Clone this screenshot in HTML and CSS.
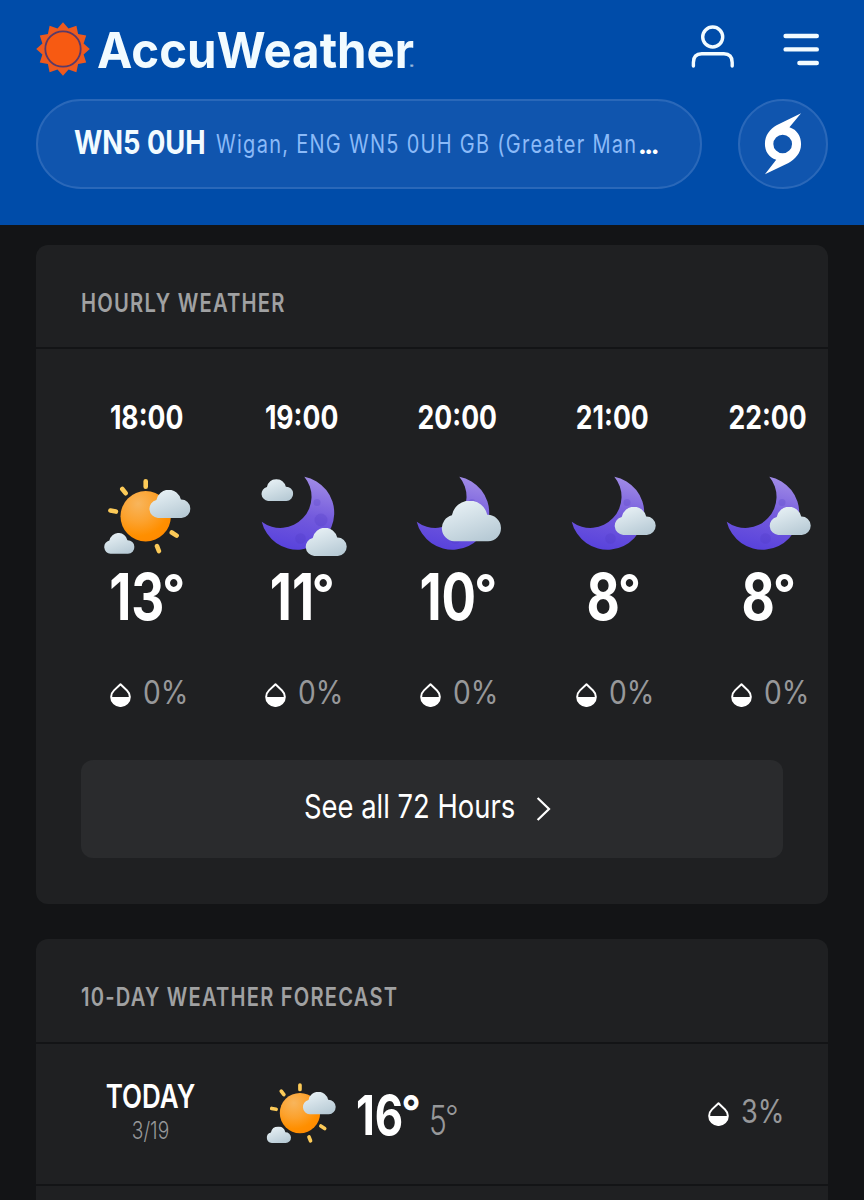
FILE: index.html
```html
<!DOCTYPE html>
<html lang="en">
<head>
<meta charset="utf-8">
<title>Wigan Hourly Weather | AccuWeather</title>
<link rel="stylesheet" href="styles.css">
</head>
<body>
<svg class="defs" width="0" height="0">
  <defs>
    <linearGradient id="cloudFill" x1="0.2" y1="0" x2="0.7" y2="1">
      <stop offset="0" stop-color="#e9f2f6"/>
      <stop offset="1" stop-color="#b7cad5"/>
    </linearGradient>
    <linearGradient id="moonFill" x1="0.6" y1="0" x2="0.4" y2="1">
      <stop offset="0" stop-color="#a08be6"/>
      <stop offset="0.5" stop-color="#745bdd"/>
      <stop offset="1" stop-color="#5842dc"/>
    </linearGradient>
    <radialGradient id="sunFill" cx="0.35" cy="0.25" r="0.8">
      <stop offset="0" stop-color="#f8b55c"/>
      <stop offset="0.45" stop-color="#fca22e"/>
      <stop offset="0.8" stop-color="#ff8f00"/>
      <stop offset="1" stop-color="#ff8a00"/>
    </radialGradient>
    <symbol id="cloud" viewBox="0 0 42 28">
      <path fill="url(#cloudFill)" d="M9.2 28A9.2 9.2 0 0 1 7.7 9.9A12.5 12.5 0 0 1 32.2 9.6A9.2 9.2 0 0 1 32.8 28Z"/>
    </symbol>
    <symbol id="moon" viewBox="0 0 100 90">
      <path fill="url(#moonFill)" d="M52.3 6.7A36.8 36.8 0 1 1 9.7 51.7A31.2 31.2 0 0 0 52.3 6.7Z"/>
      <g fill="#4a35c0" opacity="0.22">
        <circle cx="69" cy="50" r="6.5"/>
        <circle cx="48.5" cy="68.5" r="5.3"/>
        <circle cx="65" cy="32.5" r="3.5"/>
      </g>
    </symbol>
    <symbol id="sun" viewBox="0 0 100 90">
      <g stroke="#fcca58" stroke-width="4.6" stroke-linecap="round">
        <path d="M48.7 11.3V16.8M25.3 19L28.6 23.2M13.4 40.6L18.9 41.6M74.8 62.5L79.6 65.6M60 76.2L61.9 81"/>
      </g>
      <circle cx="48.7" cy="46.3" r="25.2" fill="url(#sunFill)"/>
      <use href="#cloud" x="51.7" y="20" width="42" height="28"/>
      <use href="#cloud" x="6.7" y="63" width="31" height="21"/>
    </symbol>
    <symbol id="drop" viewBox="0 0 21 24">
      <path fill="none" stroke="#fff" stroke-width="2" stroke-linejoin="round" d="M10.5 1.3L17 7.4A9.3 9.1 0 1 1 4 7.4Z"/>
      <path fill="#fff" d="M1.2 14H19.8A9.3 9.3 0 0 1 1.2 14Z"/>
    </symbol>
  </defs>
</svg>

<header class="header">
  <div class="topbar">
    <svg class="logo-sun" width="54" height="54" viewBox="-27 -27 54 54">
      <polygon fill="#ee5a1e" points="0,-26.8 5.5,-20.6 13.4,-23.2 15.1,-15.1 23.2,-13.4 20.6,-5.5 26.8,0 20.6,5.5 23.2,13.4 15.1,15.1 13.4,23.2 5.5,20.6 0,26.8 -5.5,20.6 -13.4,23.2 -15.1,15.1 -23.2,13.4 -20.6,5.5 -26.8,0 -20.6,-5.5 -23.2,-13.4 -15.1,-15.1 -13.4,-23.2 -5.5,-20.6"/>
      <circle r="17.7" fill="#f75a12" stroke="#5a3a68" stroke-width="1.8"/>
    </svg>
    <div class="logo-name"><span>AccuWeather</span></div>
    <div class="reg">®</div>
    <svg class="user" width="44" height="46" viewBox="0 0 44 46" fill="none" stroke="#f2fbff" stroke-width="3.4">
      <circle cx="21.7" cy="13" r="10"/>
      <path stroke-linecap="round" d="M2.4 42V38.5Q2.4 29.7 10.7 29.7H32.9Q41.2 29.7 41.2 38.5V42"/>
    </svg>
    <svg class="menu" width="38" height="36" viewBox="0 0 38 36" stroke="#f2fbff" stroke-width="4.4" stroke-linecap="round">
      <path d="M3.6 4H34.8M3.6 17.4H34.8M17.4 31H34.8"/>
    </svg>
  </div>
  <div class="searchbar">
    <div class="search">
      <div class="place"><span>WN5 0UH</span></div>
      <div class="region"><span>Wigan, ENG WN5 0UH GB (Greater Man</span></div>
      <div class="dots">...</div>
    </div>
    <div class="storm">
      <svg width="40" height="66" viewBox="306 302 124 200">
        <path fill="#fff" fill-rule="evenodd" d="M424 307L388 350C412 358 424 378 424 402C424 432 405 448 385 461L312 496L347 451C323 443 312 424 312 402C312 374 328 356 348 344ZM367 373A29 29 0 1 0 367 431A29 29 0 1 0 367 373Z"/>
      </svg>
    </div>
  </div>
</header>

<div class="card">
  <div class="card-title hourly-title"><span>HOURLY WEATHER</span></div>
  <div class="hours">
    <div class="hour">
      <div class="time">18:00</div>
      <svg class="icon" viewBox="0 0 100 90"><use href="#sun"/></svg>
      <div class="temp">13<i class="deg">°</i></div>
      <div class="precip"><svg class="drop"><use href="#drop"/></svg><span>0%</span></div>
    </div>
    <div class="hour">
      <div class="time">19:00</div>
      <svg class="icon" viewBox="0 0 100 90"><use href="#moon"/><use href="#cloud" x="9" y="9.3" width="32.4" height="21.6"/><use href="#cloud" x="53" y="58" width="42" height="28"/></svg>
      <div class="temp">11<i class="deg">°</i></div>
      <div class="precip"><svg class="drop"><use href="#drop"/></svg><span>0%</span></div>
    </div>
    <div class="hour">
      <div class="time">20:00</div>
      <svg class="icon" viewBox="0 0 100 90"><use href="#moon"/><use href="#cloud" x="33.8" y="31" width="60.6" height="40.4"/></svg>
      <div class="temp">10<i class="deg">°</i></div>
      <div class="precip"><svg class="drop"><use href="#drop"/></svg><span>0%</span></div>
    </div>
    <div class="hour">
      <div class="time">21:00</div>
      <svg class="icon" viewBox="0 0 100 90"><use href="#moon"/><use href="#cloud" x="52" y="37" width="42" height="28"/></svg>
      <div class="temp">8<i class="deg">°</i></div>
      <div class="precip"><svg class="drop"><use href="#drop"/></svg><span>0%</span></div>
    </div>
    <div class="hour">
      <div class="time">22:00</div>
      <svg class="icon" viewBox="0 0 100 90"><use href="#moon"/><use href="#cloud" x="52" y="37" width="42" height="28"/></svg>
      <div class="temp">8<i class="deg">°</i></div>
      <div class="precip"><svg class="drop"><use href="#drop"/></svg><span>0%</span></div>
    </div>
  </div>
  <div class="more">
    <div class="more-text"><span>See all 72 Hours</span></div>
    <svg width="16" height="24" viewBox="0 0 16 24" fill="none" stroke="#fff" stroke-width="2.2"><path d="M1.6 1L13 12L1.6 23"/></svg>
  </div>
</div>

<div class="card daily">
  <div class="card-title daily-title"><span>10-DAY WEATHER FORECAST</span></div>
  <div class="day">
    <div class="date">
      <div class="dow">TODAY</div>
      <div class="md">3/19</div>
    </div>
    <svg class="day-icon" viewBox="0 0 100 90"><use href="#sun"/></svg>
    <div class="high"><span>16<i class="deg">°</i></span></div>
    <div class="low"><span>5<i class="deg">°</i></span></div>
    <div class="precip day-precip"><svg class="drop"><use href="#drop"/></svg><span>3%</span></div>
  </div>
</div>
</body>
</html>
```

FILE: styles.css
```css
* {
  box-sizing: border-box;
}
body {
  margin: 0;
  background-color: #131416;
  color: #fff;
  font-family: Inter, Roboto, sans-serif;
  white-space: nowrap;
}
svg {
  display: block;
  flex: none;
}
.defs {
  position: absolute;
}
span {
  display: inline-block;
  transform-origin: 0 50%;
}
.deg {
  display: inline-block;
  font-size: 0.8em;
  font-style: normal;
  line-height: 0;
  vertical-align: 0.18em;
  transform: scaleX(1.22);
}

/* header */
.header {
  height: 225px;
  padding: 22px 36px 0;
  background-color: #004ca9;
}
.topbar {
  display: flex;
  height: 77px;
}
.logo-name {
  width: 311px;
  margin-left: 7px;
  font-size: 50px;
  font-weight: 650;
  line-height: 56px;
  color: #f2fbff;
}
.logo-name span {
  transform: scaleX(0.948);
}
.reg {
  width: 7px;
  padding-left: 2px;
  font-size: 5px;
  line-height: 88px;
}
.user {
  margin: 2px 0 0 276px;
}
.menu {
  margin: 10px 0 0 47px;
}
.searchbar {
  display: flex;
  justify-content: space-between;
}
.search {
  display: flex;
  width: 666px;
  height: 90px;
  padding-left: 36px;
  border: 2px solid #2a68b9;
  border-radius: 45px;
  background-color: #1055ae;
}
.place {
  width: 142px;
  font-size: 33px;
  font-weight: 700;
  line-height: 82px;
  color: #f2fbff;
}
.place span {
  transform: scaleX(0.826);
}
.region {
  width: 422px;
  font-size: 25px;
  letter-spacing: 1.6px;
  line-height: 87px;
  color: #8bbaf8;
}
.region span {
  transform: scaleX(0.8);
}
.dots {
  font-size: 25px;
  font-weight: 800;
  letter-spacing: -2.5px;
  line-height: 88px;
}
.storm {
  display: flex;
  align-items: center;
  justify-content: center;
  width: 90px;
  height: 90px;
  border: 2px solid #2a68b9;
  border-radius: 50%;
  background-color: #1055ae;
}

/* cards */
.card {
  margin: 20px 36px 35px;
  border-radius: 12px;
  background-color: #1f2022;
  overflow: hidden;
}
.card-title {
  height: 104px;
  padding-left: 45px;
  border-bottom: 2px solid #131416;
  font-size: 25px;
  font-weight: 600;
  letter-spacing: 1.5px;
  line-height: 116px;
  color: #a0a1a2;
}
.hourly-title span {
  transform: scaleX(0.808);
}
.daily-title span {
  transform: scaleX(0.805);
}
.hours {
  display: flex;
  height: 411px;
  padding: 48px 0 0 33px;
}
.hour {
  flex: none;
  display: flex;
  flex-direction: column;
  align-items: center;
  width: 155.2px;
}
.time {
  font-size: 33px;
  font-weight: 650;
  line-height: 40px;
  transform: scaleX(0.805);
}
.icon {
  width: 100px;
  height: 90px;
  margin-top: 33px;
}
.temp {
  font-size: 64px;
  font-weight: 700;
  line-height: 74px;
  transform: scaleX(0.8);
}
.precip {
  display: flex;
  width: 73px;
  margin-top: 39px;
  font-size: 32px;
  font-weight: 400;
  line-height: 40px;
  color: #97989a;
}
.precip span {
  margin-left: 12px;
  transform: scaleX(0.88);
}
.drop {
  width: 21px;
  height: 24px;
  margin-top: 10px;
}
.more {
  display: flex;
  height: 98px;
  margin: 0 45px 46px;
  padding-left: 223px;
  border-radius: 12px;
  background-color: #2a2b2d;
  font-size: 33px;
  line-height: 92px;
}
.more-text {
  width: 232px;
}
.more-text span {
  transform: scaleX(0.83);
}
.more svg {
  margin-top: 37px;
}

/* daily list */
.daily {
  height: 261px;
  margin-bottom: 0;
  border-radius: 12px 12px 0 0;
}
.daily .card-title {
  height: 105px;
}
.day {
  display: flex;
  height: 142px;
  border-bottom: 2px solid #131416;
}
.date {
  width: 229px;
  padding-top: 32px;
  text-align: center;
}
.dow {
  font-size: 32.5px;
  font-weight: 600;
  line-height: 42px;
  transform: scaleX(0.8);
}
.md {
  font-size: 24px;
  font-weight: 350;
  line-height: 26px;
  color: #97989a;
  transform: scaleX(0.8);
}
.day-icon {
  width: 80px;
  height: 72px;
  margin: 32px 0 0 -4px;
}
.high {
  width: 73px;
  margin-left: 15px;
  font-size: 55px;
  font-weight: 700;
  line-height: 142px;
}
.high span {
  transform: scaleX(0.795);
}
.low {
  width: 279px;
  font-size: 41px;
  font-weight: 350;
  line-height: 152px;
  color: #97989a;
}
.low span {
  transform: scaleX(0.73);
}
.day-precip {
  margin-top: 48px;
}
.day-precip span {
  transform: scaleX(0.85);
}
```
